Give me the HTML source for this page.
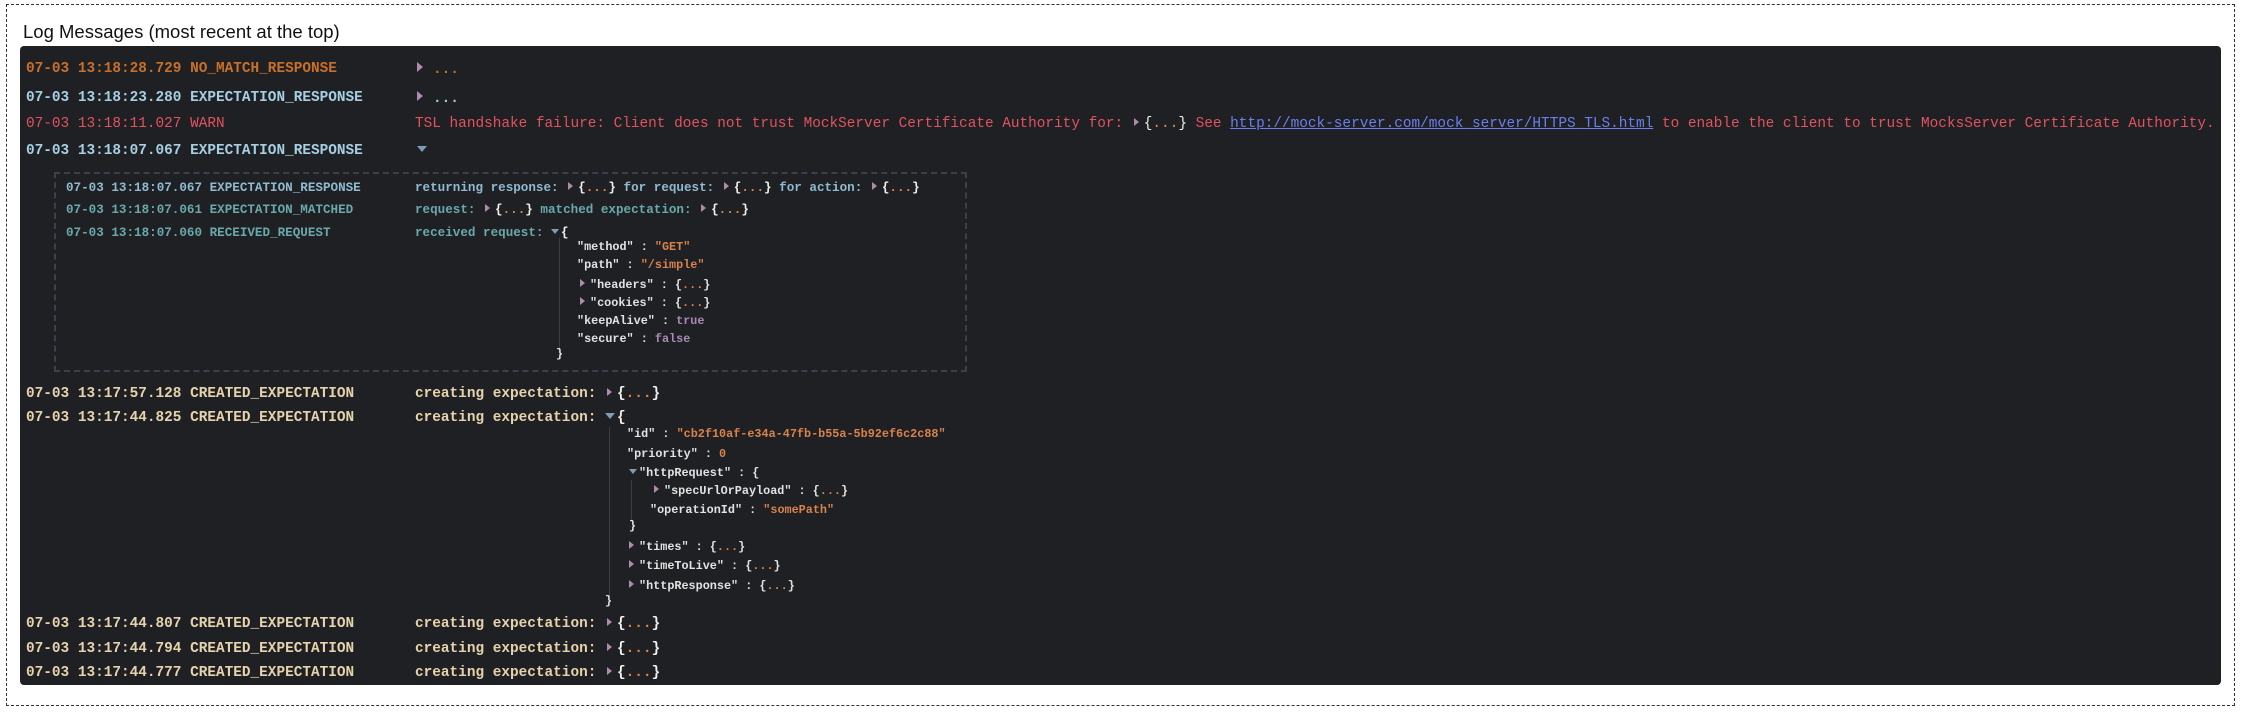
<!DOCTYPE html>
<html><head><meta charset="utf-8"><style>
body{margin:0;width:2244px;height:712px;background:#fff;position:relative;overflow:hidden;font-family:"Liberation Mono",monospace;}
.outer{position:absolute;left:6px;top:4px;width:2227px;height:700px;border:1px dashed #333;}
.title{position:absolute;left:23px;top:21px;font-family:"Liberation Sans",sans-serif;font-size:18.5px;color:#111;}
.panel{position:absolute;left:20px;top:46px;width:2201px;height:639px;background:#1f2023;border-radius:4px;}
.r{position:absolute;white-space:pre;font-weight:bold;line-height:1;}
.t{font-size:14.4px;}
.i{font-size:12.6px;}
.j{font-size:11.8px;color:#e2e2e2;}
.rt{display:inline-block;width:0;height:0;border-top:4px solid transparent;border-bottom:4px solid transparent;border-left:5px solid #b08aae;margin:0 5px 0 2px;vertical-align:1px;}
.rtb{border-top:5px solid transparent;border-bottom:5px solid transparent;border-left:6px solid #b08aae;margin-right:10px;}
.dn{display:inline-block;width:0;height:0;border-left:5px solid transparent;border-right:5px solid transparent;border-top:6px solid #7e9cb8;margin:0 2px 0 0;vertical-align:2px;}
.b{color:#f0f0f0}.d{color:#e0874a}
.s{color:#d9824c}.p{color:#a98ab5}
.vl{position:absolute;width:1px;background:#3b3d42;}
a{color:#6b7ff0;text-decoration:underline;}
</style></head><body>
<div class="outer"></div>
<div class="title">Log Messages (most recent at the top)</div>
<div class="panel"></div>

<div class="r t" style="left:26px;top:62px;color:#c8702a">07-03 13:18:28.729 NO_MATCH_RESPONSE</div>
<div class="r t" style="left:415px;top:62px;color:#c8702a"><span class="rt rtb"></span>...</div>
<div class="r t" style="left:26px;top:91px;color:#a6cfe2">07-03 13:18:23.280 EXPECTATION_RESPONSE</div>
<div class="r t" style="left:415px;top:91px;color:#a6cfe2"><span class="rt rtb"></span>...</div>
<div class="r t" style="left:26px;top:117px;color:#e2525f;font-weight:normal">07-03 13:18:11.027 WARN</div>
<div class="r t" style="left:415px;top:117px;color:#e2525f;font-weight:normal">TSL handshake failure: Client does not trust MockServer Certificate Authority for: <span class="rt"></span><span class="b">{</span><span class="d">...</span><span class="b">}</span> See <a>http://mock-server.com/mock_server/HTTPS_TLS.html</a> to enable the client to trust MocksServer Certificate Authority.</div>
<div class="r t" style="left:26px;top:144px;color:#a6cfe2">07-03 13:18:07.067 EXPECTATION_RESPONSE</div>
<div class="r t" style="left:417px;top:144px;color:#a6cfe2"><span class="dn"></span></div>

<div style="position:absolute;left:54px;top:172px;width:909px;height:196px;border:2px dashed #39414d;"></div>
<div class="r i" style="left:66px;top:182px;color:#8fbad0">07-03 13:18:07.067 EXPECTATION_RESPONSE</div>
<div class="r i" style="left:415px;top:182px;color:#8fbad0">returning response: <span class="rt"></span><span class="b">{</span><span class="d">...</span><span class="b">}</span> for request: <span class="rt"></span><span class="b">{</span><span class="d">...</span><span class="b">}</span> for action: <span class="rt"></span><span class="b">{</span><span class="d">...</span><span class="b">}</span></div>
<div class="r i" style="left:66px;top:204px;color:#6aa8aa">07-03 13:18:07.061 EXPECTATION_MATCHED</div>
<div class="r i" style="left:415px;top:204px;color:#6aa8aa">request: <span class="rt"></span><span class="b">{</span><span class="d">...</span><span class="b">}</span> matched expectation: <span class="rt"></span><span class="b">{</span><span class="d">...</span><span class="b">}</span></div>
<div class="r i" style="left:66px;top:227px;color:#6aa8aa">07-03 13:18:07.060 RECEIVED_REQUEST</div>
<div class="r i" style="left:415px;top:227px;color:#6aa8aa">received request: <span class="dn" style="border-left-width:4px;border-right-width:4px;border-top-width:5px"></span><span class="b">{</span></div>
<div class="vl" style="left:559px;top:238px;height:110px"></div>
<div class="r j" style="left:577px;top:242px">"method" : <span class="s">"GET"</span></div>
<div class="r j" style="left:577px;top:260px">"path" : <span class="s">"/simple"</span></div>
<div class="r j" style="left:578px;top:279px"><span class="rt"></span>"headers" : {<span class="d">...</span>}</div>
<div class="r j" style="left:578px;top:297px"><span class="rt"></span>"cookies" : {<span class="d">...</span>}</div>
<div class="r j" style="left:577px;top:316px">"keepAlive" : <span class="p">true</span></div>
<div class="r j" style="left:577px;top:334px">"secure" : <span class="p">false</span></div>
<div class="r j" style="left:556px;top:349px">}</div>

<div class="r t" style="left:26px;top:387px;color:#e6d3ad">07-03 13:17:57.128 CREATED_EXPECTATION</div>
<div class="r t" style="left:415px;top:387px;color:#e6d3ad">creating expectation: <span class="rt"></span><span class="b">{</span><span class="d">...</span><span class="b">}</span></div>
<div class="r t" style="left:26px;top:411px;color:#e6d3ad">07-03 13:17:44.825 CREATED_EXPECTATION</div>
<div class="r t" style="left:415px;top:411px;color:#e6d3ad">creating expectation: <span class="dn"></span><span class="b">{</span></div>
<div class="vl" style="left:609px;top:427px;height:170px"></div>
<div class="r j" style="left:627px;top:429px">"id" : <span class="s">"cb2f10af-e34a-47fb-b55a-5b92ef6c2c88"</span></div>
<div class="r j" style="left:627px;top:449px">"priority" : <span class="s">0</span></div>
<div class="r j" style="left:629px;top:468px"><span class="dn" style="border-left-width:4px;border-right-width:4px;border-top-width:5px"></span>"httpRequest" : {</div>
<div class="vl" style="left:631px;top:480px;height:40px"></div>
<div class="r j" style="left:652px;top:485px"><span class="rt"></span>"specUrlOrPayload" : {<span class="d">...</span>}</div>
<div class="r j" style="left:650px;top:505px">"operationId" : <span class="s">"somePath"</span></div>
<div class="r j" style="left:629px;top:521px">}</div>
<div class="r j" style="left:627px;top:541px"><span class="rt"></span>"times" : {<span class="d">...</span>}</div>
<div class="r j" style="left:627px;top:560px"><span class="rt"></span>"timeToLive" : {<span class="d">...</span>}</div>
<div class="r j" style="left:627px;top:580px"><span class="rt"></span>"httpResponse" : {<span class="d">...</span>}</div>
<div class="r j" style="left:605px;top:596px">}</div>

<div class="r t" style="left:26px;top:617px;color:#e6d3ad">07-03 13:17:44.807 CREATED_EXPECTATION</div>
<div class="r t" style="left:415px;top:617px;color:#e6d3ad">creating expectation: <span class="rt"></span><span class="b">{</span><span class="d">...</span><span class="b">}</span></div>
<div class="r t" style="left:26px;top:642px;color:#e6d3ad">07-03 13:17:44.794 CREATED_EXPECTATION</div>
<div class="r t" style="left:415px;top:642px;color:#e6d3ad">creating expectation: <span class="rt"></span><span class="b">{</span><span class="d">...</span><span class="b">}</span></div>
<div class="r t" style="left:26px;top:666px;color:#e6d3ad">07-03 13:17:44.777 CREATED_EXPECTATION</div>
<div class="r t" style="left:415px;top:666px;color:#e6d3ad">creating expectation: <span class="rt"></span><span class="b">{</span><span class="d">...</span><span class="b">}</span></div>
</body></html>
